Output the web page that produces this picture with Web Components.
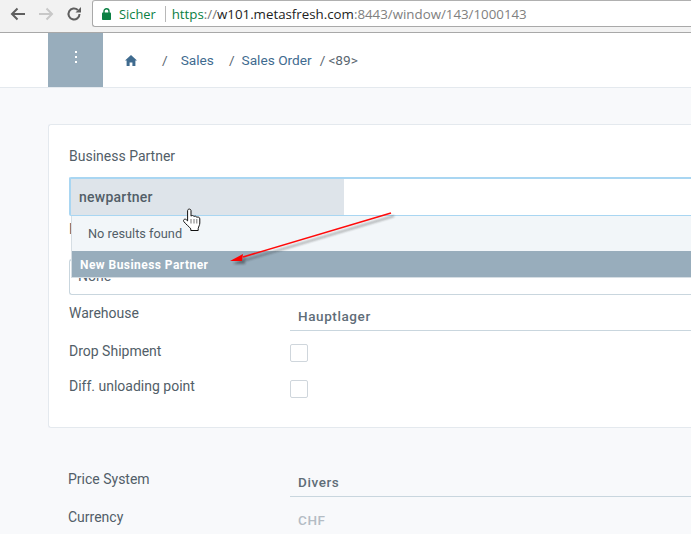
<!DOCTYPE html>
<html>
<head>
<meta charset="utf-8">
<title>Sales Order</title>
<style>
    html, body { margin: 0; padding: 0; height: 100%; overflow: hidden; }
    body { background: #f8f9fb; font-family: Roboto, sans-serif; color: #525e68; }
</style>
</head>
<body>
<browser-bar></browser-bar>
<crumb-header></crumb-header>
<doc-page>
    <form-card>
        <partner-field></partner-field>
        <form-row label="Warehouse" value="Hauptlager"></form-row>
        <form-row label="Drop Shipment" check pad="2"></form-row>
        <form-row label="Diff. unloading point" check pad="1"></form-row>
    </form-card>
    <plain-section>
        <form-row label="Price System" value="Divers"></form-row>
        <form-row label="Currency" value="CHF" muted></form-row>
    </plain-section>
</doc-page>
<script>
class browserBar extends HTMLElement {
    constructor() {
        super();
        this.attachShadow({mode: 'open'});
    }
    connectedCallback() {
        this.shadowRoot.innerHTML = `<style>
            :host {
                display: flex;
                height: 32px;
                background: #f2f2f2;
                border-bottom: 1px solid #a8a8a8;
                font-family: "Open Sans", sans-serif;
            }
            .nav { display: flex; align-items: center; width: 92px; height: 28px; padding-left: 9px; gap: 12px; box-sizing: border-box; }
            .nav svg { display: block; flex: none; overflow: visible; }
            .url {
                flex: 1;
                height: 27px;
                background: #fff;
                border: 1px solid #a9a9a9;
                border-top-color: #b0b0b0;
                border-right: 0;
                border-radius: 3px 0 0 3px;
                display: flex;
                align-items: center;
                padding-left: 9px;
                box-sizing: border-box;
                font-size: 13.3px;
                white-space: nowrap;
            }
            .secure { color: #0b8043; margin-left: 8px; font-size: 12.8px; }
            .sep { width: 1px; height: 16px; background: #b8b8b8; margin: 0 6px 0 9px; }
            .https { color: #0b8043; }
            .slash { color: #777; }
            .host { color: #222; }
            .rest { color: #808080; }
        </style>
        <div class="nav">
            <svg width="16" height="16" viewBox="0 0 16 16"><path d="M16 8H3.500M8.500 2.500 3 8l5.500 5.500" fill="none" stroke="#5f5f5f" stroke-width="2"/></svg>
            <svg width="16" height="16" viewBox="0 0 16 16"><path d="M2 8h12.500M9.500 2.500 15 8l-5.500 5.500" fill="none" stroke="#c8c8c8" stroke-width="2"/></svg>
            <svg width="16" height="16" viewBox="0 0 16 16"><path d="M14.500 8a5.500 5.500 0 1 1-1.700-4" fill="none" stroke="#5f5f5f" stroke-width="2"/><path d="M10.500 6.500H16V1z" fill="#5f5f5f"/></svg>
        </div>
        <div class="url">
            <svg width="9" height="12" viewBox="0 0 9 12"><path d="M2 5V3.200a2.500 2.500 0 0 1 5 0V5" fill="none" stroke="#0b8043" stroke-width="1.400"/><rect x="0" y="4.500" width="9" height="7.500" rx=".8" fill="#0b8043"/></svg>
            <span class="secure">Sicher</span><span class="sep"></span><span class="https">https</span><span class="slash">://</span><span class="host">w101.metasfresh.com</span><span class="rest">:8443/window/143/1000143</span>
        </div>`;
    }
}
customElements.define('browser-bar', browserBar);

class crumbHeader extends HTMLElement {
    constructor() {
        super();
        this.attachShadow({mode: 'open'});
    }
    connectedCallback() {
        this.shadowRoot.innerHTML = `<style>
            :host {
                display: flex;
                align-items: stretch;
                height: 54px;
                background: #fff;
                border-bottom: 1px solid #e4e9ee;
                padding-left: 48px;
                font-size: 13.7px;
                color: #5a6670;
            }
            .menu { width: 55px; background: #98adbc; display: flex; flex-direction: column; align-items: center; padding-top: 18px; gap: 3px; box-sizing: border-box; }
            .menu i { width: 2px; height: 2px; background: #fff; display: block; }
            .crumbs { display: flex; align-items: center; padding-left: 22px; white-space: nowrap; }
            a { color: #3f6b8f; }
            svg { display: block; }
            .s1 { margin: 0 13px 0 25px; }
            .s2 { margin: 0 7px 0 15px; }
            .s3 { margin: 0 3px 0 8px; }
        </style>
        <div class="menu"><i></i><i></i><i></i></div>
        <div class="crumbs">
            <svg width="12" height="11" viewBox="0 0 12 11"><path d="M6 0 0 5.600h1.600V11h3V7.400h2.800V11h3V5.600H12z" fill="#3f6b8f"/></svg>
            <span class="s1">/</span><a>Sales</a><span class="s2">/</span><a>Sales Order</a><span class="s3">/</span><span>&lt;89&gt;</span>
        </div>`;
    }
}
customElements.define('crumb-header', crumbHeader);

class docPage extends HTMLElement {
    constructor() {
        super();
        this.attachShadow({mode: 'open'});
    }
    connectedCallback() {
        this.shadowRoot.innerHTML = `<style>
            :host { display: block; padding: 36px 0 0 48px; }
        </style><slot></slot>`;
    }
}
customElements.define('doc-page', docPage);

class formCard extends HTMLElement {
    constructor() {
        super();
        this.attachShadow({mode: 'open'});
    }
    connectedCallback() {
        this.shadowRoot.innerHTML = `<style>
            :host {
                display: block;
                width: 643px;
                height: 304px;
                box-sizing: border-box;
                background: #fff;
                border: 1px solid #e4e9ee;
                border-right: 0;
                border-radius: 3px 0 0 3px;
                padding: 24px 0 0 20px;
            }
        </style><slot></slot>`;
    }
}
customElements.define('form-card', formCard);

class plainSection extends HTMLElement {
    constructor() {
        super();
        this.attachShadow({mode: 'open'});
    }
    connectedCallback() {
        this.shadowRoot.innerHTML = `<style>
            :host { display: flex; flex-direction: column; gap: 2px; padding: 44px 0 0 20px; --lab: 222px; }
        </style><slot></slot>`;
    }
}
customElements.define('plain-section', plainSection);

class partnerField extends HTMLElement {
    constructor() {
        super();
        this.attachShadow({mode: 'open'});
    }
    connectedCallback() {
        this.shadowRoot.innerHTML = `<style>
            :host { display: block; position: relative; height: 157px; font-size: 14px; }
            .label { height: 16px; line-height: 14px; }
            .input {
                margin-top: 12px;
                height: 39px;
                box-sizing: border-box;
                border: 1px solid #a9d6f2;
                border-top-width: 2px;
                border-left-width: 2px;
                border-right: 0;
                border-radius: 2px 0 0 2px;
                background: #fff;
                display: flex;
            }
            .sel {
                width: 273px;
                background: #dee4ea;
                line-height: 36px;
                padding-left: 8px;
                box-sizing: border-box;
                font-weight: 500;
                letter-spacing: 0.25px;
            }
            .under {
                margin-top: 43px;
                height: 36px;
                box-sizing: border-box;
                border: 1px solid #c9d6de;
                border-right: 0;
                border-radius: 3px 0 0 3px;
                padding-left: 8px;
                line-height: 32px;
                color: #5a6670;
            }
            .stub { position: absolute; left: 0; top: 72px; line-height: 16px; }
            .drop {
                position: absolute;
                left: 2px;
                right: 0;
                top: 67px;
                background: #f2f6f9;
                border: 1px solid #d6dee4;
                border-top: 0;
                border-right: 0;
                box-sizing: border-box;
            }
            .none { height: 35px; line-height: 35px; padding-left: 16px; font-size: 12.75px; }
            .new {
                height: 26px;
                line-height: 28px;
                padding-left: 8px;
                background: #98adbc;
                color: #fff;
                font-size: 12px;
                font-weight: 700;
                letter-spacing: 0.45px;
            }
            .arrow { position: absolute; left: 150px; top: 60px; overflow: visible; }
            .hand { position: absolute; left: 114px; top: 59px; }
        </style>
        <div class="label">Business Partner</div>
        <div class="input"><div class="sel">newpartner</div></div>
        <div class="stub">B</div>
        <div class="under">None</div>
        <div class="drop">
            <div class="none">No results found</div>
            <div class="new">New Business Partner</div>
        </div>
        <svg class="arrow" width="180" height="70" viewBox="0 0 180 70">
            <defs><filter id="s" x="-10%" y="-30%" width="120%" height="170%"><feGaussianBlur stdDeviation="1.200"/></filter></defs>
            <g transform="translate(3 3)" opacity=".45" filter="url(#s)"><path d="M172 4 24 48" stroke="#222" stroke-width="1.500" fill="none"/><path d="M11 52 24 45l-1 7z" fill="#222"/></g>
            <path d="M172 4 24 48" stroke="#ff0a0a" stroke-width="1.600" fill="none"/>
            <path d="M11 52 24 45l-1 7z" fill="#ff0000"/>
        </svg>
        <svg class="hand" width="18" height="24" viewBox="0 0 18 24">
            <path d="M4.600 2.600c0-2 3.400-2 3.400 0V8.200c.3-1 2.800-1 3 .4 .5-.8 2.600-.6 2.800.8 .6-.7 3-.4 3 1.400v4.200c0 2.200-1.200 3.400-1.600 5.500v2H7.800v-1.600C6.500 18.800 3 16.500.8 13.500c-1-1.500.9-3.200 2.500-1.800l1.300 1.200z" fill="#fff" stroke="#111" stroke-width="1"/>
            <path d="M8 11v4.500M11 11v4.500M13.800 11v4.500" stroke="#555" stroke-width=".8"/>
        </svg>`;
    }
}
customElements.define('partner-field', partnerField);

class formRow extends HTMLElement {
    constructor() {
        super();
        this.attachShadow({mode: 'open'});
    }
    connectedCallback() {
        const label = this.getAttribute('label');
        const value = this.getAttribute('value');
        const pad = this.getAttribute('pad') || 0;
        const field = this.hasAttribute('check')
            ? `<span class="box"></span>`
            : `<div class="val ${this.hasAttribute('muted') ? 'muted' : ''}">${value}</div>`;
        this.shadowRoot.innerHTML = `<style>
            :host { display: flex; height: 36px; font-size: 14px; }
            .lab { width: var(--lab, 221px); flex: none; line-height: 14px; padding-top: ${pad}px; }
            .val {
                flex: 1;
                height: 25px;
                box-sizing: border-box;
                border-bottom: 1px solid #c9d6de;
                padding-left: 8px;
                line-height: 20px;
                font-weight: 500;
                font-size: 13.5px;
                letter-spacing: 0.6px;
                color: #5f6d78;
            }
            .val.muted { color: #b4bcc4; border-bottom: 0; }
            .box {
                width: 18px;
                height: 18px;
                margin-top: 2px;
                box-sizing: border-box;
                border: 1px solid #cfd6dc;
                border-radius: 2px;
                background: #fff;
            }
        </style>
        <div class="lab">${label}</div>${field}`;
    }
}
customElements.define('form-row', formRow);
</script>
</body>
</html>
